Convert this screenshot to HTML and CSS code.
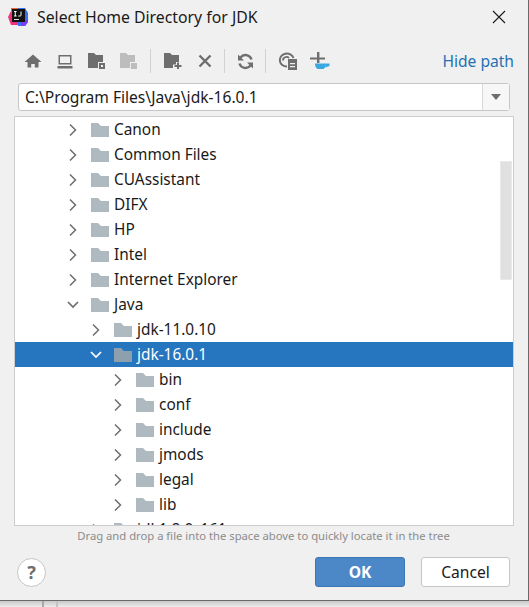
FILE: index.html
```html
<!DOCTYPE html>
<html lang="en">
<head>
  <meta charset="UTF-8" />
  <meta name="viewport" content="width=device-width, initial-scale=1.0" />
  <title>Select Home Directory for JDK</title>
  <link rel="stylesheet" href="styles.css">
</head>
<body>
  <svg class="defs" width="0" height="0">
    <symbol id="folder" viewBox="0 0 18 14">
      <path d="M0 0h7l3 3h8v11H0z" fill="currentColor" />
    </symbol>
    <symbol id="chev-right" viewBox="0 0 12 12">
      <path d="M3 .5l5.500 5.500-5.500 5.500" fill="none" stroke="currentColor" stroke-width="1.500" />
    </symbol>
    <symbol id="chev-down" viewBox="0 0 12 12">
      <path d="M1 3l5 5 5-5" fill="none" stroke="currentColor" stroke-width="1.700" />
    </symbol>
  </svg>

  <div class="dialog">
    <div class="titlebar">
      <svg class="logo" width="20" height="18" viewBox="0 0 20 18">
        <path d="M0 9L4 1h6v16H3z" fill="#f0307c" />
        <path d="M3 0h7v5H3z" fill="#f5652a" />
        <path d="M10 0h7l3 5v9l-3 4h-7z" fill="#3a6ff0" />
        <path d="M13 12h7v2l-3 4h-4z" fill="#7a3ff0" />
        <rect x="4" y="1" width="13" height="13" fill="#111" />
        <rect x="6" y="11" width="5" height="1" fill="#ddd" />
        <path d="M6 3.500h2.600M7.300 3.500v4.500M6 8h2.600M13 3.500v3.700q0 .8-.9.8H10.300" fill="none" stroke="#fff" stroke-width="1" />
      </svg>
      <span class="title">Select Home Directory for JDK</span>
      <svg class="close" width="14" height="14" viewBox="0 0 14 14">
        <path d="M1 1l12 12M13 1L1 13" stroke="#1a1a1a" stroke-width="1.100" fill="none" />
      </svg>
    </div>

    <div class="toolbar">
      <button class="tool">
        <svg width="18" height="16" viewBox="0 0 18 16"><path d="M9 1.500L.5 9H3.500v5.500h3.700V11h3.600v3.500h3.700V9h3z" fill="#6e6e6e" /></svg>
      </button>
      <button class="tool">
        <svg width="16" height="15" viewBox="0 0 16 15"><path d="M1.500 1h13v9.500h-13zM3 2.500v6.500h10V2.500zM0.500 12h15v2.500H.5z" fill="#6e6e6e" fill-rule="evenodd" /></svg>
      </button>
      <button class="tool">
        <svg width="18" height="16" viewBox="0 0 18 16"><path d="M0 0h6l2 2h7v7h-5v6H0z" fill="#6e6e6e" /><path d="M11 10h6v6h-6z" fill="#6e6e6e" /><path d="M13 12h2v2h-2z" fill="#f0f0f0" /></svg>
      </button>
      <button class="tool">
        <svg width="18" height="16" viewBox="0 0 18 16"><path d="M0 0h6l2 2h7v7h-5v6H0z" fill="#bdbdbd" /><path d="M11 10h6v6h-6z" fill="#bdbdbd" /></svg>
      </button>
      <span class="sep sep-first"></span>
      <button class="tool">
        <svg width="18" height="16" viewBox="0 0 18 16"><path d="M0 0h6l2 2h7v7h-3v2.500H9V15H0z" fill="#6e6e6e" /><path d="M13 9.500h2v2.500h2.500v2H15v2h-2v-2h-2.500v-2H13z" fill="#6e6e6e" /></svg>
      </button>
      <button class="tool">
        <svg width="14" height="14" viewBox="0 0 14 14"><path d="M1.500 1.500l11 11M12.500 1.500l-11 11" stroke="#6e6e6e" stroke-width="2.400" fill="none" /></svg>
      </button>
      <span class="sep sep-second"></span>
      <button class="tool">
        <svg width="17" height="17" viewBox="0 0 17 17"><path d="M14.500 6.500A6.300 6.300 0 0 0 3.500 4.500M2.500 10.500A6.300 6.300 0 0 0 13.500 12.500" stroke="#6e6e6e" stroke-width="2.400" fill="none" /><path d="M1 1.500v6h6zM16 15.500v-6h-6z" fill="#6e6e6e" /></svg>
      </button>
      <span class="sep sep-last"></span>
      <button class="tool">
        <svg width="20" height="18" viewBox="0 0 20 18"><path d="M9 14.500A7 6.500 0 1 1 15.500 6" stroke="#6e6e6e" stroke-width="2" fill="none" /><path d="M5 8.500A3.500 3.300 0 0 1 11 6" stroke="#6e6e6e" stroke-width="1.800" fill="none" /><path d="M10 7h9v11h-9z" fill="#6e6e6e" /><path d="M12 11h5v1.200h-5zM12 14h5v1.200h-5z" fill="#f0f0f0" /></svg>
      </button>
      <button class="tool">
        <svg width="20" height="18" viewBox="0 0 20 18"><path d="M7 0h2.400v5.500H15v2H9.400V11H7V7.500H0v-2h7z" fill="#6e6e6e" /><path d="M5 11.500h11q0 4-2.500 5.500H7.500Q5 15.500 5 11.500z" fill="#3aa7de" /><path d="M16 11.500h3.500v2.500l-4 1.500z" fill="#3aa7de" /></svg>
      </button>
      <a class="hide-path" href="#">Hide path</a>
    </div>

    <div class="path-field">
      <span class="path-value">C:\Program Files\Java\jdk-16.0.1</span>
      <span class="path-arrow"></span>
    </div>

    <div class="tree">
      <div class="row depth-0"><svg class="chev"><use href="#chev-right" /></svg><svg class="folder"><use href="#folder" /></svg>Canon</div>
      <div class="row depth-0"><svg class="chev"><use href="#chev-right" /></svg><svg class="folder"><use href="#folder" /></svg>Common Files</div>
      <div class="row depth-0"><svg class="chev"><use href="#chev-right" /></svg><svg class="folder"><use href="#folder" /></svg>CUAssistant</div>
      <div class="row depth-0"><svg class="chev"><use href="#chev-right" /></svg><svg class="folder"><use href="#folder" /></svg>DIFX</div>
      <div class="row depth-0"><svg class="chev"><use href="#chev-right" /></svg><svg class="folder"><use href="#folder" /></svg>HP</div>
      <div class="row depth-0"><svg class="chev"><use href="#chev-right" /></svg><svg class="folder"><use href="#folder" /></svg>Intel</div>
      <div class="row depth-0"><svg class="chev"><use href="#chev-right" /></svg><svg class="folder"><use href="#folder" /></svg>Internet Explorer</div>
      <div class="row depth-0"><svg class="chev"><use href="#chev-down" /></svg><svg class="folder"><use href="#folder" /></svg>Java</div>
      <div class="row depth-1"><svg class="chev"><use href="#chev-right" /></svg><svg class="folder"><use href="#folder" /></svg>jdk-11.0.10</div>
      <div class="row depth-1 selected"><svg class="chev"><use href="#chev-down" /></svg><svg class="folder"><use href="#folder" /></svg>jdk-16.0.1</div>
      <div class="row depth-2"><svg class="chev"><use href="#chev-right" /></svg><svg class="folder"><use href="#folder" /></svg>bin</div>
      <div class="row depth-2"><svg class="chev"><use href="#chev-right" /></svg><svg class="folder"><use href="#folder" /></svg>conf</div>
      <div class="row depth-2"><svg class="chev"><use href="#chev-right" /></svg><svg class="folder"><use href="#folder" /></svg>include</div>
      <div class="row depth-2"><svg class="chev"><use href="#chev-right" /></svg><svg class="folder"><use href="#folder" /></svg>jmods</div>
      <div class="row depth-2"><svg class="chev"><use href="#chev-right" /></svg><svg class="folder"><use href="#folder" /></svg>legal</div>
      <div class="row depth-2"><svg class="chev"><use href="#chev-right" /></svg><svg class="folder"><use href="#folder" /></svg>lib</div>
      <div class="row depth-1"><svg class="chev"><use href="#chev-right" /></svg><svg class="folder"><use href="#folder" /></svg>jdk1.8.0_161</div>
      <div class="scrollbar"></div>
    </div>

    <p class="hint">Drag and drop a file into the space above to quickly locate it in the tree</p>

    <div class="footer">
      <button class="help">?</button>
      <div class="actions">
        <button class="btn btn-ok">OK</button>
        <button class="btn btn-cancel">Cancel</button>
      </div>
    </div>
  </div>

  <div class="behind">
    <span class="behind-line"></span>
    <span class="behind-line behind-line-light"></span>
  </div>
</body>
</html>
```

FILE: styles.css
```css
* {
  box-sizing: border-box;
}

html, body {
  height: 100%;
}

body {
  margin: 0;
  overflow: hidden;
  background: #fff;
  font-family: "Noto Sans", "Open Sans", sans-serif;
  color: #1a1a1a;
}

.defs {
  display: block;
  height: 0;
}

.dialog {
  display: flex;
  flex-direction: column;
  width: 529px;
  height: 601px;
  padding-right: 1px;
  background: #f0f0f0;
  border-right: 1px solid #6a6a6a;
  border-bottom: 1px solid #6a6a6a;
}

.titlebar {
  display: flex;
  align-items: center;
  height: 36px;
  padding: 0 21px 3px 8px;
  flex-shrink: 0;
}

.logo {
  margin-right: 9px;
}

.title {
  font-size: 15.8px;
  flex: 1;
}

.toolbar {
  display: flex;
  align-items: center;
  height: 47px;
  padding: 3px 13px 0 17px;
  flex-shrink: 0;
}

.tool {
  display: flex;
  align-items: center;
  justify-content: center;
  width: 32px;
  height: 24px;
  padding: 0;
  border: none;
  background: none;
}

.sep {
  width: 1px;
  height: 24px;
  background: #d2d2d2;
}

.sep-first {
  margin: 0 6px 0 5px;
}

.sep-second {
  margin: 0 4px 0 3px;
}

.sep-last {
  margin: 0 6px 0 4px;
}

.hide-path {
  margin-left: auto;
  font-size: 15.6px;
  color: #2470b3;
  text-decoration: none;
}

.path-field {
  display: flex;
  align-items: center;
  width: 492px;
  height: 28px;
  margin-left: 18px;
  background: #fff;
  border: 1px solid #c6c6c6;
  border-radius: 3px;
  flex-shrink: 0;
}

.path-value {
  flex: 1;
  padding-left: 6px;
  font-size: 15.6px;
}

.path-arrow {
  display: flex;
  align-items: center;
  justify-content: center;
  width: 27px;
  height: 100%;
  background: #f7f7f7;
  border-left: 1px solid #d8d8d8;
}

.path-arrow::after {
  content: "";
  border-top: 6px solid #6e6e6e;
  border-left: 5px solid transparent;
  border-right: 5px solid transparent;
}

.tree {
  position: relative;
  width: 500px;
  height: 410px;
  margin: 5px 0 0 14px;
  overflow: hidden;
  background: #fff;
  border: 1px solid #cdcdcd;
  flex-shrink: 0;
}

.row {
  display: flex;
  align-items: center;
  height: 25px;
  font-size: 15.4px;
}

.row .chev {
  width: 12px;
  height: 12px;
  margin-right: 12px;
  color: #6e6e6e;
}

.row .folder {
  width: 18px;
  height: 14px;
  margin-right: 5px;
  color: #afb9c0;
}

.depth-0 {
  padding-left: 52px;
}

.depth-1 {
  padding-left: 75px;
}

.depth-2 {
  padding-left: 97px;
}

.selected {
  background: #2675bf;
  color: #fff;
}

.selected .chev {
  color: #fff;
}

.selected .folder {
  color: #8e9fae;
}

.scrollbar {
  position: absolute;
  top: 44px;
  right: 1px;
  width: 12px;
  height: 119px;
  background: #e0e0e0;
  border: 1px solid #e9e9e9;
}

.hint {
  margin: 2px 0 0;
  font-size: 11.25px;
  line-height: 15px;
  color: #8c8c8c;
  text-align: center;
}

.footer {
  display: flex;
  align-items: center;
  justify-content: space-between;
  padding: 14px 17px 0;
}

.help {
  width: 29px;
  height: 29px;
  padding: 0;
  background: #fff;
  border: 1px solid #c6c6c6;
  border-radius: 50%;
  font-family: inherit;
  font-size: 18px;
  font-weight: 700;
  color: #6e6e6e;
}

.actions {
  display: flex;
  gap: 16px;
}

.btn {
  width: 90px;
  height: 30px;
  padding: 0;
  background: #fff;
  border: 1px solid #c6c6c6;
  border-radius: 3px;
  font-family: inherit;
  font-size: 15.6px;
  color: #1a1a1a;
}

.btn-cancel {
  width: 89px;
}

.btn-ok {
  background: #4c87c8;
  border-color: #3d76b4;
  font-weight: 700;
  color: #fff;
}

.behind {
  display: flex;
  height: 6px;
  padding-left: 42px;
  gap: 12px;
  background: linear-gradient(#c8c8c8, #ececec);
}

.behind-line {
  width: 2px;
  background: #a8a8a8;
}

.behind-line-light {
  background: #c4c4c4;
}
```
